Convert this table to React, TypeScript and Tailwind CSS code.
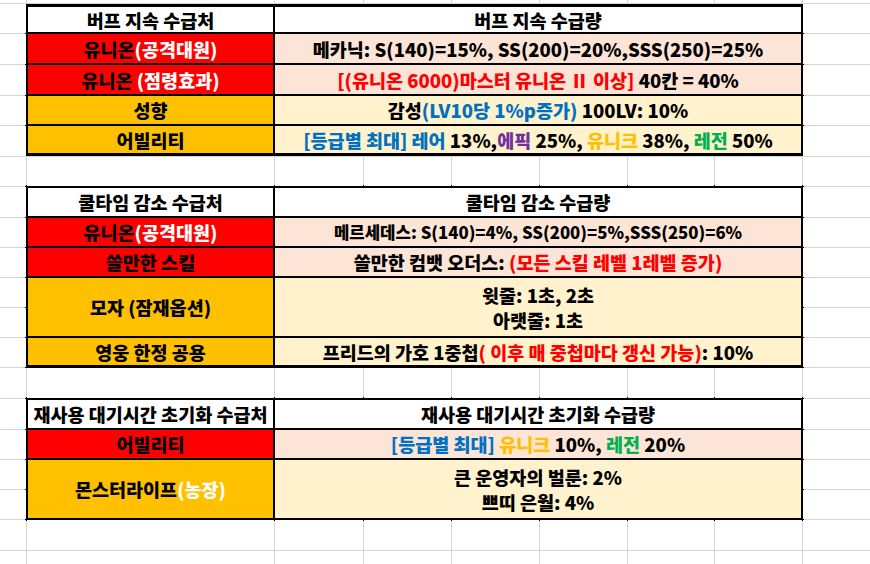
import React from "react";

const RED = "bg-[#ff0000]";
const GOLD = "bg-[#ffc000]";
const PINK = "bg-[#fce4d6]";
const CREAM = "bg-[#fff2cc]";

function Cell({
  bg = "bg-white",
  className = "",
  children,
}: {
  bg?: string;
  className?: string;
  children: React.ReactNode;
}) {
  return (
    <div
      className={`flex flex-col items-center justify-center whitespace-nowrap pt-px text-center ${bg} ${className}`}
    >
      {children}
    </div>
  );
}

const W = ({ children }: { children: React.ReactNode }) => (
  <span className="text-white">{children}</span>
);
const R = ({ children }: { children: React.ReactNode }) => (
  <span className="text-[#ff0000]">{children}</span>
);
const B = ({ children }: { children: React.ReactNode }) => (
  <span className="text-[#0070c0]">{children}</span>
);
const P = ({ children }: { children: React.ReactNode }) => (
  <span className="text-[#7030a0]">{children}</span>
);
const Y = ({ children }: { children: React.ReactNode }) => (
  <span className="text-[#ffc000]">{children}</span>
);
const G = ({ children }: { children: React.ReactNode }) => (
  <span className="text-[#00b050]">{children}</span>
);

export default function App() {
  // 20 rows x 9 cols = 180 cells, tables cover 105 of them
  const blanks = Array.from({ length: 75 });

  return (
    <div className="h-[564px] w-[870px] overflow-hidden bg-white font-['Noto_Sans_CJK_KR','Noto_Sans',sans-serif] text-[18.5px] font-black leading-none text-black">
      <div className="grid h-[564px] w-[870px] grid-cols-[26px_247px_88px_87px_87px_87px_86px_87px_1fr] grid-rows-[3px_29px_30px_30px_29px_30px_29px_30px_29px_29px_29px_29px_29px_30px_30px_29px_29px_29px_30px_1fr] gap-px bg-[#d4d4d4]">
        {/* 버프 지속 */}
        <div className="col-span-7 col-start-2 row-span-5 row-start-2 ml-[-2px] mr-[-2px] grid grid-cols-[245px_1fr] grid-rows-[25px_29px_29px_28px_27px] gap-[2px] border-[3px] border-black bg-black">
          <Cell>버프 지속 수급처</Cell>
          <Cell>버프 지속 수급량</Cell>
          <Cell bg={RED}>
            <span>
              유니온<W>(공격대원)</W>
            </span>
          </Cell>
          <Cell bg={PINK}>메카닉: S(140)=15%, SS(200)=20%,SSS(250)=25%</Cell>
          <Cell bg={RED}>
            <span>
              유니온 <W>(점령효과)</W>
            </span>
          </Cell>
          <Cell bg={PINK}>
            <span>
              <R>[(유니온 6000)마스터 유니온 Ⅱ 이상]</R> 40칸 = 40%
            </span>
          </Cell>
          <Cell bg={GOLD}>성향</Cell>
          <Cell bg={CREAM}>
            <span>
              감성<B>(LV10당 1%p증가)</B> 100LV: 10%
            </span>
          </Cell>
          <Cell bg={GOLD}>어빌리티</Cell>
          <Cell bg={CREAM}>
            <span>
              <B>[등급별 최대] 레어</B> 13%,<P>에픽</P> 25%, <Y>유니크</Y> 38%,{" "}
              <G>레전</G> 50%
            </span>
          </Cell>
        </div>

        {/* 쿨타임 감소 */}
        <div className="col-span-7 col-start-2 row-span-6 row-start-8 mb-[-1px] ml-[-2px] mr-[-2px] mt-[-2px] grid grid-cols-[245px_1fr] grid-rows-[28px_28px_28px_58px_27px] gap-[2px] border-[3px] border-black bg-black">
          <Cell>쿨타임 감소 수급처</Cell>
          <Cell>쿨타임 감소 수급량</Cell>
          <Cell bg={RED}>
            <span>
              유니온<W>(공격대원)</W>
            </span>
          </Cell>
          <Cell bg={PINK} className="text-[16.75px]">
            메르세데스: S(140)=4%, SS(200)=5%,SSS(250)=6%
          </Cell>
          <Cell bg={RED}>쓸만한 스킬</Cell>
          <Cell bg={PINK}>
            <span>
              쓸만한 컴뱃 오더스: <R>(모든 스킬 레벨 1레벨 증가)</R>
            </span>
          </Cell>
          <Cell bg={GOLD}>모자 (잠재옵션)</Cell>
          <Cell bg={CREAM} className="gap-[6px]">
            <span>윗줄: 1초, 2초</span>
            <span>아랫줄: 1초</span>
          </Cell>
          <Cell bg={GOLD}>영웅 한정 공용</Cell>
          <Cell bg={CREAM}>
            <span>
              프리드의 가호 1중첩<R>( 이후 매 중첩마다 갱신 가능)</R>: 10%
            </span>
          </Cell>
        </div>

        {/* 재사용 대기시간 초기화 */}
        <div className="col-span-7 col-start-2 row-span-4 row-start-15 mb-[-2px] ml-[-2px] mr-[-2px] mt-[-2px] grid grid-cols-[245px_1fr] grid-rows-[28px_28px_58px] gap-[2px] border-[3px] border-black bg-black">
          <Cell>재사용 대기시간 초기화 수급처</Cell>
          <Cell>재사용 대기시간 초기화 수급량</Cell>
          <Cell bg={RED}>어빌리티</Cell>
          <Cell bg={PINK}>
            <span>
              <B>[등급별 최대]</B> <Y>유니크</Y> 10%, <G>레전</G> 20%
            </span>
          </Cell>
          <Cell bg={GOLD}>
            <span>
              몬스터라이프<W>(농장)</W>
            </span>
          </Cell>
          <Cell bg={CREAM} className="gap-[6px]">
            <span>큰 운영자의 벌룬: 2%</span>
            <span>쁘띠 은월: 4%</span>
          </Cell>
        </div>

        {blanks.map((_, i) => (
          <div key={i} className="bg-white" />
        ))}
      </div>
    </div>
  );
}
